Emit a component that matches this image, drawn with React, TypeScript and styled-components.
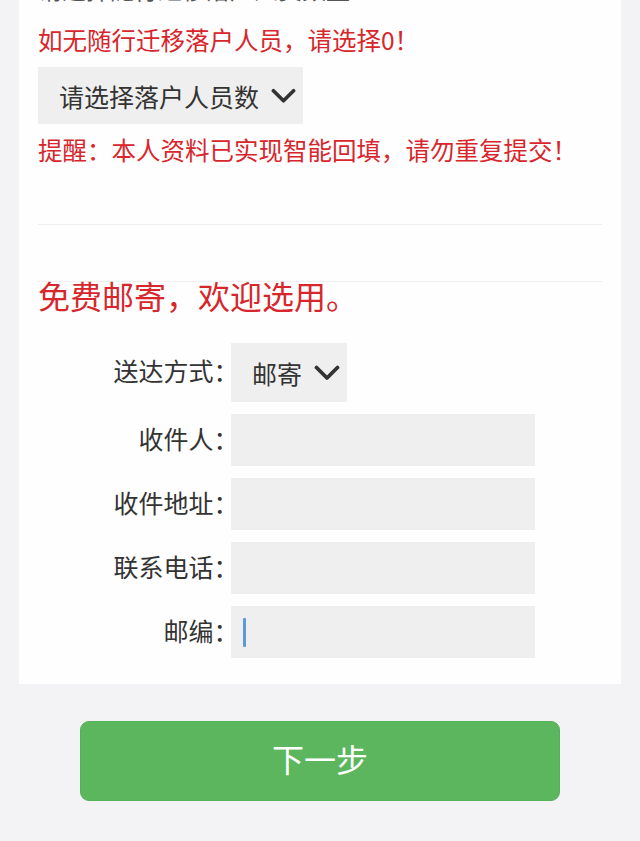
import React from "react";
import styled, { createGlobalStyle } from "styled-components";

const Global = createGlobalStyle`
  html, body { margin: 0; padding: 0; background: #f3f2f4; }
  body { font-family: "Noto Sans CJK SC", "Noto Sans", sans-serif; }
  * { box-sizing: border-box; }
`;

const Page = styled.div`
  display: flex;
  flex-direction: column;
  align-items: center;
  height: 841px;
  overflow: hidden;
`;

const Card = styled.section`
  width: 602px;
  background: #fefefe;
  display: flex;
  flex-direction: column;
  padding: 0 19px 26px 19px;
`;

const CutLine = styled.div`
  margin-top: -29px;
  font-size: 24px;
  line-height: 36px;
  color: #555;
  white-space: nowrap;
`;

const Notice = styled.p<{ $top: number }>`
  margin: ${(p) => p.$top}px 0 0 0;
  font-size: 24.5px;
  line-height: 36px;
  color: #d7262c;
  white-space: nowrap;
`;

const SelectBox = styled.div<{ $w: number; $h: number }>`
  width: ${(p) => p.$w}px;
  height: ${(p) => p.$h}px;
  align-self: flex-start;
  display: flex;
  align-items: center;
  gap: 12px;
  padding: 0 7px 0 21px;
  background: #efefef;
  font-size: 25px;
  color: #333;
  white-space: nowrap;
`;

const Divider = styled.hr`
  margin: 56px 0 0 0;
  border: 0;
  height: 1px;
  background: #efeff1;
`;

const Heading = styled.h2`
  margin: -3px 0 0 0;
  font-size: 32px;
  line-height: 32px;
  font-weight: normal;
  color: #d7262c;
`;

const Form = styled.div`
  margin-top: 32px;
  display: grid;
  grid-template-columns: 188px 304px;
  column-gap: 5px;
  row-gap: 12px;
  align-items: center;
`;

const Label = styled.label`
  text-align: right;
  font-size: 25px;
  color: #333;
  white-space: nowrap;
  padding-bottom: 5px;
  font-feature-settings: "halt";
`;

const Field = styled.div`
  height: 52px;
  background: #efeff0;
  display: flex;
  align-items: center;
  padding-left: 12px;
`;

const Caret = styled.span`
  width: 3px;
  height: 29px;
  background: #5b9bd8;
  border-radius: 1px;
`;

const NextButton = styled.button`
  margin-top: 37px;
  width: 480px;
  height: 80px;
  padding: 0 0 6px 0;
  border: 1px solid #55b05a;
  border-radius: 9px;
  background: #5cb65e;
  color: #fff;
  font-family: "Noto Sans CJK SC", sans-serif;
  font-size: 32px;
  cursor: pointer;
`;

const Chevron = () => (
  <svg width="26" height="18" viewBox="0 0 26 18">
    <polyline
      points="2.5,3.5 13,14 23.5,3.5"
      fill="none"
      stroke="#333"
      strokeWidth="3.8"
      strokeLinecap="round"
      strokeLinejoin="round"
    />
  </svg>
);

const fields = ["收件人：", "收件地址：", "联系电话："];

export default function App() {
  return (
    <Page>
      <Global />
      <Card>
        <CutLine>请选择随行迁移落户人员数量</CutLine>
        <Notice $top={15}>如无随行迁移落户人员，请选择0！</Notice>
        <SelectBox $w={265} $h={57} style={{ marginTop: 9 }}>
          请选择落户人员数
          <Chevron />
        </SelectBox>
        <Notice $top={8}>提醒：本人资料已实现智能回填，请勿重复提交！</Notice>
        <Divider />
        <Divider />
        <Heading>免费邮寄，欢迎选用。</Heading>
        <Form>
          <Label>送达方式：</Label>
          <SelectBox $w={116} $h={59}>
            邮寄
            <Chevron />
          </SelectBox>
          {fields.map((f) => (
            <React.Fragment key={f}>
              <Label>{f}</Label>
              <Field />
            </React.Fragment>
          ))}
          <Label>邮编：</Label>
          <Field>
            <Caret />
          </Field>
        </Form>
      </Card>
      <NextButton>下一步</NextButton>
    </Page>
  );
}
